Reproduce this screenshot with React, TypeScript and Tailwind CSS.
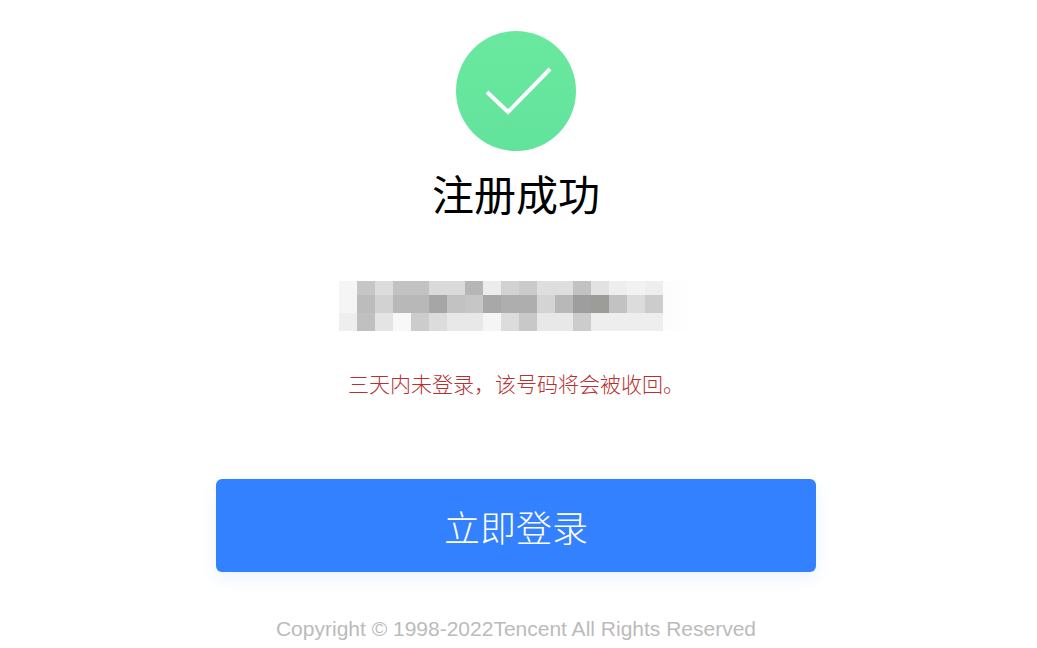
const mosaic = [
  ["#f5f5f5", "#c6c6c6", "#dcdcdc", "#c2c2c2", "#c2c2c2", "#dadada", "#dadada", "#b6b6b6", "#ececec", "#d2d2d2", "#cacaca", "#dedede", "#dedede", "#c2c2c2", "#e2e2e2", "#eeeeee", "#f2f2f2", "#eeeeee"],
  ["#f5f5f5", "#bcbcbc", "#d2d2d2", "#b8b8b8", "#b8b8b8", "#a6a6a6", "#c2c2c2", "#c6c6c6", "#a8a8a8", "#aeaeae", "#aeaeae", "#d4d4d2", "#b8b8b8", "#9e9e9e", "#9c9c98", "#c2c2c2", "#dcdcdc", "#cccccc"],
  ["#eeeeee", "#c0c0c0", "#e4e4e4", "#f8f8f8", "#cccccc", "#dcdcdc", "#e8e8e8", "#e8e8e8", "#f5f5f5", "#dcdcdc", "#c8c8c8", "#e8e8e8", "#e8e8e8", "#cccccc", "#eeeeee", "#eeeeee", "#eeeeee", "#eeeeee"],
];

const cjk = "font-['Noto_Sans_CJK_SC','Liberation_Sans',sans-serif]";

export default function App() {
  return (
    <div className="min-h-[648px] w-[1032px] bg-white flex flex-col items-center overflow-hidden pt-[31px] font-['Liberation_Sans','Noto_Sans_CJK_SC',sans-serif]">
      <div className="w-[120px] h-[120px] rounded-full bg-gradient-to-b from-[#6ae8a0] to-[#62e39b] flex items-center justify-center">
        <svg width="120" height="120" viewBox="0 0 120 120" fill="none">
          <path d="M31 61 L52 81 L94 38" stroke="#ffffff" strokeWidth="4" strokeLinecap="butt" strokeLinejoin="miter" />
        </svg>
      </div>

      <h1 className={`mt-[15px] text-[42px] leading-[54px] text-black font-normal ${cjk}`}>注册成功</h1>

      <div className="mt-[61px] flex">
        <div className="flex flex-col">
          {mosaic.map((row, i) => (
            <div key={i} className={i === 0 ? "flex h-[14px]" : "flex h-[18px]"}>
              {row.map((color, j) => (
                <div key={j} className="w-[18px]" style={{ backgroundColor: color }} />
              ))}
            </div>
          ))}
        </div>
        {/* faded tail of the blur, keeps the block off-centre like the source */}
        <div className="w-[30px] bg-gradient-to-r from-[#fcfcfc] to-white" />
      </div>

      <p className={`mt-[38px] text-[21px] leading-[28px] text-[#b8302f] font-light ${cjk}`}>三天内未登录，该号码将会被收回。</p>

      <button className={`mt-[82px] w-[600px] h-[93px] rounded-[6px] bg-[#3381ff] text-white text-[36px] font-light shadow-[0_6px_16px_rgba(51,129,255,0.10)] ${cjk}`}>
        立即登录
      </button>

      <p className="mt-[44px] text-[21px] leading-[26px] text-[#bbbbbb]">Copyright © 1998-2022Tencent All Rights Reserved</p>
    </div>
  );
}
